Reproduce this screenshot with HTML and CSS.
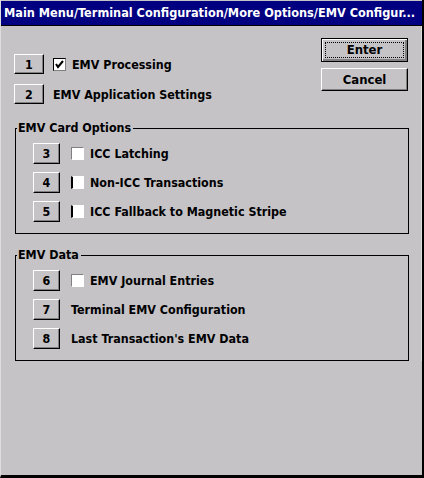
FILE: index.html
```html
<!DOCTYPE html>
<html lang="en">
<head>
    <meta charset="UTF-8">
    <meta name="viewport" content="width=device-width, initial-scale=1.0">
    <title>EMV Configuration</title>
    <link rel="stylesheet" href="styles.css">
</head>
<body>
    <div class="window">
        <div class="titlebar">Main Menu/Terminal Configuration/More Options/EMV Configur...</div>
        <div class="content">
            <div class="top">
                <div class="main-opts">
                    <div class="row">
                        <button class="num">1</button>
                        <span class="check checked">
                            <svg width="11" height="11" viewBox="0 0 11 11"><polyline points="2,5 4,8 9,2" fill="none" stroke="#000" stroke-width="2"/></svg>
                        </span>
                        <span class="label">EMV Processing</span>
                    </div>
                    <div class="row">
                        <button class="num">2</button>
                        <span class="label">EMV Application Settings</span>
                    </div>
                </div>
                <div class="actions">
                    <button class="btn default"><span class="focus">Enter</span></button>
                    <button class="btn">Cancel</button>
                </div>
            </div>

            <fieldset class="group">
                <legend>EMV Card Options</legend>
                <div class="row">
                    <button class="num small">3</button>
                    <span class="check"></span>
                    <span class="label">ICC Latching</span>
                </div>
                <div class="row">
                    <button class="num small">4</button>
                    <span class="check dark-edge"></span>
                    <span class="label">Non-ICC Transactions</span>
                </div>
                <div class="row">
                    <button class="num small">5</button>
                    <span class="check dark-edge"></span>
                    <span class="label">ICC Fallback to Magnetic Stripe</span>
                </div>
            </fieldset>

            <fieldset class="group second">
                <legend>EMV Data</legend>
                <div class="row">
                    <button class="num small">6</button>
                    <span class="check"></span>
                    <span class="label">EMV Journal Entries</span>
                </div>
                <div class="row">
                    <button class="num small">7</button>
                    <span class="label">Terminal EMV Configuration</span>
                </div>
                <div class="row">
                    <button class="num small">8</button>
                    <span class="label">Last Transaction's EMV Data</span>
                </div>
            </fieldset>
        </div>
    </div>
</body>
</html>
```

FILE: styles.css
```css
body {
    margin: 0;
    padding: 0;
    background: #c5c3c6;
    font-family: "DejaVu Sans Condensed", "DejaVu Sans", sans-serif;
    font-stretch: condensed;
    font-weight: bold;
    font-size: 12.4px;
    color: #000;
}
.window {
    width: 424px;
    height: 478px;
    box-sizing: border-box;
    background: #c5c3c6;
    border-left: 1px solid #dedede;
    border-right: 2px solid #000;
    border-bottom: 3px solid #000;
    padding-top: 1px;
}
.titlebar {
    height: 24px;
    line-height: 24px;
    background: #000080;
    color: #fff;
    padding-left: 3px;
    font-size: 12.6px;
    white-space: nowrap;
    overflow: hidden;
    border-bottom: 1px solid #000;
}
.content {
    padding: 0 13px 0 13px;
    box-shadow: inset -1px 0 #dedede;
}
.top {
    display: flex;
    justify-content: space-between;
    height: 92px;
}
.main-opts {
    margin-top: 28px;
    display: flex;
    flex-direction: column;
    gap: 10px;
}
.row {
    display: flex;
    align-items: center;
    height: 20px;
}
.num {
    width: 30px;
    height: 20px;
    padding: 0;
    margin: 0 9px 0 0;
    font: inherit;
    background: #c5c3c6;
    border: 1px solid;
    border-color: #fff #000 #000 #fff;
    box-shadow: inset -1px -1px #808080;
    box-sizing: border-box;
}
.num.small {
    width: 27px;
    height: 21px;
    margin-right: 11px;
}
.check {
    width: 13px;
    height: 13px;
    background: #fff;
    box-sizing: border-box;
    border: 1px solid;
    border-color: #808080 #fff #fff #808080;
    margin-right: 6px;
    display: flex;
    align-items: center;
    justify-content: center;
}
.check.checked {
    border-color: #000 #808080 #808080 #000;
}
.check.dark-edge {
    border-left: 2px solid #000;
    border-top-color: #fff;
}
.actions {
    margin-top: 12px;
    margin-right: 1px;
    width: 87px;
    display: flex;
    flex-direction: column;
    gap: 6px;
}
.btn {
    height: 23px;
    padding: 0;
    font: inherit;
    font-size: 13px;
    background: #c5c3c6;
    border: 1px solid;
    border-color: #fff #000 #000 #fff;
    box-shadow: inset -1px -1px #808080;
    box-sizing: border-box;
}
.btn.default {
    height: 24px;
    border: 1px solid #000;
    box-shadow: inset 1px 1px #fff, inset -2px -2px #808080;
    padding: 3px;
}
.focus {
    display: block;
    height: 100%;
    box-sizing: border-box;
    border: 1px dotted #000;
    line-height: 14px;
}
.group {
    margin: 3px 0 0 1px;
    padding: 8px 0 11px 17px;
    border: 1px solid #000;
    display: flex;
    flex-direction: column;
    gap: 8px;
}
.group .row {
    height: 21px;
}
.group.second {
    margin-top: 14px;
}
.group legend {
    padding: 0 2px 0 1px;
    margin-left: -16px;
    line-height: 14px;
}
```
